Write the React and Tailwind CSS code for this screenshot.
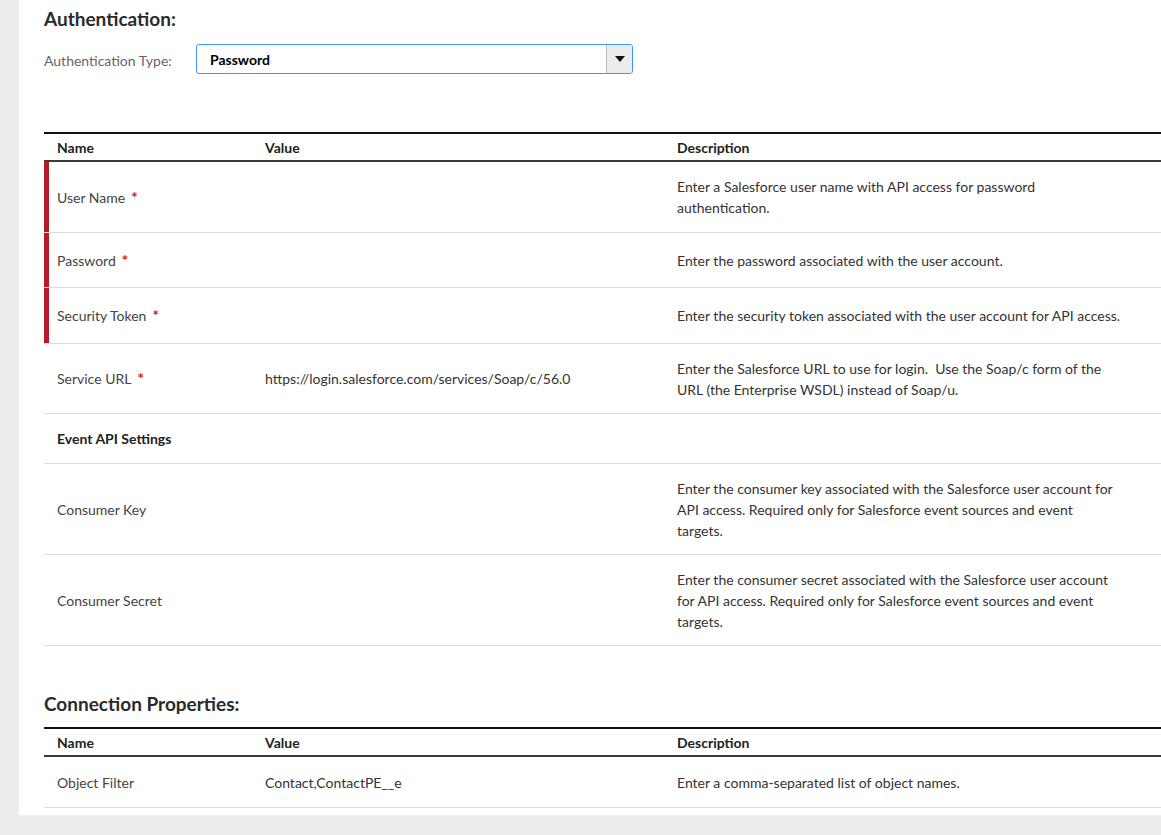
import React from "react";

const FONT = { fontFamily: "Lato, 'Open Sans', sans-serif" };

function Req() {
  return <span className="text-[#e0102a] ml-[6px] relative top-0 text-[15px] font-bold leading-none">*</span>;
}

function Header() {
  return (
    <div className="flex h-[30px] border-t-2 border-b-2 border-t-[#111] border-b-[#3a3a3a] items-center text-[14px] font-bold text-[#222]">
      <div className="w-[208px] pl-[13px]">Name</div>
      <div className="w-[412px] pl-[13px]">Value</div>
      <div className="flex-1 pl-[13px]">Description</div>
    </div>
  );
}

function Row({ h, req, name, value, desc, bold }) {
  return (
    <div className={`flex border-b border-[#dcdcdc] ${h}`}>
      <div className={`w-[5px] shrink-0 ${req ? "bg-[#b5192a]" : ""}`} />
      <div className={`w-[203px] pl-[8px] flex items-center text-[14px] ${bold ? "font-bold text-[#222]" : "text-[#444]"}`}>
        <span>{name}</span>
        {req && <Req />}
      </div>
      <div className="w-[412px] pl-[13px] flex items-center text-[14px] text-[#333]">{value}</div>
      <div className="flex-1 pl-[13px] pr-[30px] flex items-center text-[14px] leading-[21px] text-[#333]">
        <div>{desc}</div>
      </div>
    </div>
  );
}

export default function App() {
  return (
    <div className="min-h-[835px] bg-[#ededed] pl-[19px] pb-[20px]" style={FONT}>
      <div className="bg-white pl-[25px] pt-[7px] pb-[7px]">
        <h2 className="text-[19px] font-bold text-[#2a2a2a] leading-[24px]">Authentication:</h2>
        <div className="flex items-center mt-[13px]">
          <div className="w-[152px] text-[14px] text-[#666] pt-[3px]">Authentication Type:</div>
          <div className="w-[437px] h-[30px] border border-[#3d98f2] rounded-[3px] flex overflow-hidden">
            <div className="flex-1 pl-[13px] flex items-center text-[14px] font-bold text-black">Password</div>
            <div className="w-[26px] bg-[#ececec] border-l border-[#bdbdbd] flex items-center justify-center">
              <svg width="10" height="6" viewBox="0 0 10 6"><path d="M0 0 L10 0 L5 6 Z" fill="#111" /></svg>
            </div>
          </div>
        </div>

        <div className="mt-[58px]">
          <Header />
          <Row h="h-[71px]" req name="User Name" desc={<>Enter a Salesforce user name with API access for password<br />authentication.</>} />
          <Row h="h-[55px]" req name="Password" desc="Enter the password associated with the user account." />
          <Row h="h-[56px]" req name="Security Token" desc="Enter the security token associated with the user account for API access." />
          <Row h="h-[70px]" name={<>Service URL<Req /></>} value="https://login.salesforce.com/services/Soap/c/56.0" desc={<>Enter the Salesforce URL to use for login.&nbsp; Use the Soap/c form of the<br />URL (the Enterprise WSDL) instead of Soap/u.</>} />
          <Row h="h-[50px]" bold name="Event API Settings" desc="" />
          <Row h="h-[91px]" name="Consumer Key" desc={<>Enter the consumer key associated with the Salesforce user account for<br />API access. Required only for Salesforce event sources and event<br />targets.</>} />
          <Row h="h-[91px]" name="Consumer Secret" desc={<>Enter the consumer secret associated with the Salesforce user account<br />for API access. Required only for Salesforce event sources and event<br />targets.</>} />
        </div>

        <h2 className="mt-[46px] text-[19px] font-bold text-[#2a2a2a] leading-[24px]">Connection Properties:</h2>
        <div className="mt-[11px]">
          <Header />
          <Row h="h-[51px]" name="Object Filter" value="Contact,ContactPE__e" desc="Enter a comma-separated list of object names." />
        </div>
      </div>
    </div>
  );
}
